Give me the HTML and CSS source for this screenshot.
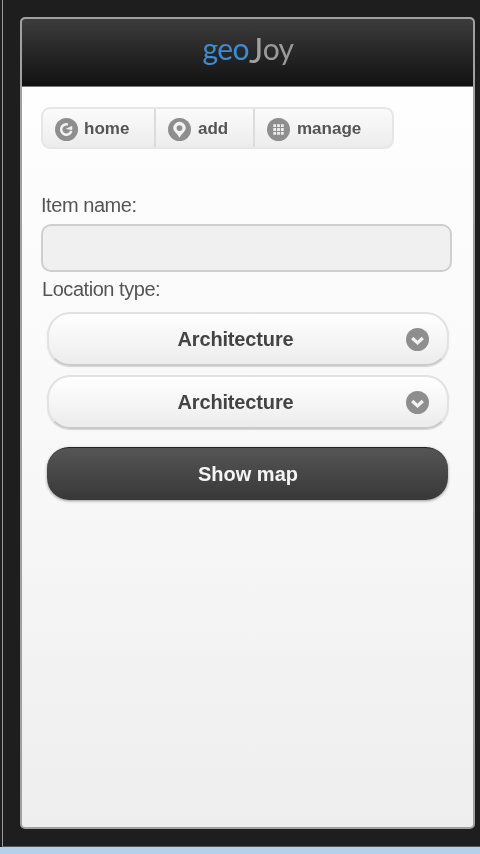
FILE: index.html
```html
<!DOCTYPE html>
<html lang="en">
  <head>
    <meta charset="UTF-8" />
    <meta name="viewport" content="width=device-width, initial-scale=1.0" />
    <title>geoJoy</title>
    <link rel="stylesheet" href="styles.css">
  </head>
  <body>
    <div class="window">
      <div class="page">
        <header class="header">
          <h1 class="logo"><span class="logo-geo">geo</span><span class="logo-j">J</span><span class="logo-joy">oy</span></h1>
        </header>
        <main class="content">
          <nav class="nav">
            <a class="nav-item nav-home">
              <svg class="icon" viewBox="0 0 24 24">
                <circle cx="12" cy="12" r="12" fill="#8e8e8e" />
                <path d="M17 13.500a5.400 5.400 0 1 1-3.500-6.600" fill="none" stroke="#f2f2f2" stroke-width="2.600" />
                <path d="M11 11.500l7-3.500v4.500z" fill="#f2f2f2" />
              </svg>
              home
            </a>
            <a class="nav-item nav-add">
              <svg class="icon" viewBox="0 0 24 24">
                <circle cx="12" cy="12" r="12" fill="#8e8e8e" />
                <path d="M12 4a6.500 6.500 0 0 0-6.500 6.500c0 3.500 3.500 5 6.500 10 3-5 6.500-6.500 6.500-10A6.500 6.500 0 0 0 12 4z" fill="#f2f2f2" />
                <circle cx="12" cy="10.500" r="3" fill="#8e8e8e" />
              </svg>
              add
            </a>
            <a class="nav-item nav-manage">
              <svg class="icon" viewBox="0 0 24 24">
                <circle cx="12" cy="12" r="12" fill="#8e8e8e" />
                <path d="M6.500 6.500h3v3h-3zM10.500 6.500h3v3h-3zM14.500 6.500h3v3h-3zM6.500 10.500h3v3h-3zM10.500 10.500h3v3h-3zM14.500 10.500h3v3h-3zM6.500 14.500h3v3h-3zM10.500 14.500h3v3h-3zM14.500 14.500h3v3h-3z" fill="#ececec" />
              </svg>
              manage
            </a>
          </nav>

          <label class="field-label" for="itemName">Item name:</label>
          <input class="text-input" type="text" id="itemName" />

          <label class="field-label location-label">Location type:</label>
          <div class="selects">
            <div class="select">
              <span class="select-text">Architecture</span>
              <svg class="icon select-icon" viewBox="0 0 24 24">
                <circle cx="12" cy="12" r="12" fill="#8e8e8e" />
                <path d="M6.500 10.500l5.500 5 5.500-5" fill="none" stroke="#f2f2f2" stroke-width="3.400" />
              </svg>
            </div>
            <div class="select">
              <span class="select-text">Architecture</span>
              <svg class="icon select-icon" viewBox="0 0 24 24">
                <circle cx="12" cy="12" r="12" fill="#8e8e8e" />
                <path d="M6.500 10.500l5.500 5 5.500-5" fill="none" stroke="#f2f2f2" stroke-width="3.400" />
              </svg>
            </div>
            <button class="map-button">Show map</button>
          </div>
        </main>
      </div>
    </div>
    <div class="taskbar"></div>
  </body>
</html>
```

FILE: styles.css
```css
* {
  margin: 0;
  padding: 0;
  box-sizing: border-box;
}

body {
  font-family: "Liberation Sans", Arial, sans-serif;
  background-color: #1e1e1e;
  color: #444;
  display: flex;
  flex-direction: column;
  height: 854px;
  overflow: hidden;
}

/* the whole shot is a soft upscale */
.window,
.taskbar {
  filter: blur(0.7px);
}

.window {
  flex: 1;
  margin-left: 2px;
  padding: 17px 5px 17px 17px;
  border-left: 1px solid #9a9a9a;
  border-bottom: 1px solid #555;
  background-color: #1e1e1e;
  display: flex;
}

.taskbar {
  height: 7px;
  background-color: #b3d0ec;
}

.page {
  flex: 1;
  display: flex;
  flex-direction: column;
  border: 2px solid #a0a0a0;
  border-radius: 5px;
  overflow: hidden;
  background: linear-gradient(#ffffff, #f8f8f8 55%, #eeeeee);
}

/* Header */
.header {
  height: 68px;
  display: flex;
  justify-content: center;
  align-items: flex-start;
  background: linear-gradient(#3c3c3c, #111111);
  border-bottom: 1px solid #777;
}

.logo {
  font-family: Lato, "Open Sans", sans-serif;
  font-weight: 400;
  font-size: 30px;
  line-height: 40px;
  letter-spacing: -0.6px;
  margin-top: 9px;
  margin-left: 1px;
}

.logo-geo {
  color: #3f8ad0;
}

.logo-j {
  color: #a0a0a0;
  font-size: 34px;
  line-height: 30px;
  vertical-align: -3px;
}

.logo-joy {
  color: #9a9a9a;
}

/* Nav bar */
.content {
  flex: 1;
  padding: 20px 22px 0 19px;
}

.nav {
  display: flex;
  width: 353px;
  height: 42px;
  border: 2px solid #e6e6e6;
  border-radius: 9px;
  background: linear-gradient(#fbfbfb, #ececec);
}

.nav-item {
  display: flex;
  align-items: center;
  gap: 6px;
  padding-left: 12px;
  padding-top: 2px;
  font-size: 17px;
  font-weight: bold;
  color: #555;
  border-right: 2px solid #dcdcdc;
}

.nav-home {
  width: 113px;
}

.nav-add {
  width: 99px;
  gap: 7px;
}

.nav-manage {
  flex: 1;
  gap: 7px;
  border-right: none;
}

.icon {
  width: 23px;
  height: 23px;
  flex-shrink: 0;
}

/* Form */
.field-label {
  display: block;
  font-size: 20px;
  letter-spacing: -0.45px;
  color: #555;
  line-height: 24px;
  margin-top: 44px;
}

.text-input {
  display: block;
  width: 411px;
  height: 48px;
  margin-top: 7px;
  background-color: #f0f0f0;
  border: 2px solid #cfcfcf;
  border-radius: 10px;
}

.location-label {
  margin-top: 5px;
  margin-left: 1px;
}

.selects {
  margin-top: 11px;
  margin-left: 6px;
  width: 402px;
  display: flex;
  flex-direction: column;
  gap: 9px;
}

.select {
  height: 54px;
  display: flex;
  align-items: center;
  justify-content: center;
  position: relative;
  border: 2px solid #e2e2e2;
  border-bottom-color: #cacaca;
  border-radius: 23px;
  background: linear-gradient(#ffffff, #ececec);
  box-shadow: 0 1px 1px rgba(0, 0, 0, 0.15);
}

.select-text {
  font-size: 20px;
  font-weight: bold;
  letter-spacing: -0.15px;
  margin-right: 25px;
}

.select-icon {
  position: absolute;
  right: 18px;
  top: 14px;
}

.map-button {
  height: 53px;
  margin-top: 9px;
  margin-right: 1px;
  padding-left: 1px;
  font-family: inherit;
  font-size: 20px;
  font-weight: bold;
  color: #f4f4f4;
  border: none;
  border-top: 1px solid #222;
  border-radius: 22px;
  background: linear-gradient(#555555, #383838);
  box-shadow: 0 1px 3px rgba(0, 0, 0, 0.4);
}
```
